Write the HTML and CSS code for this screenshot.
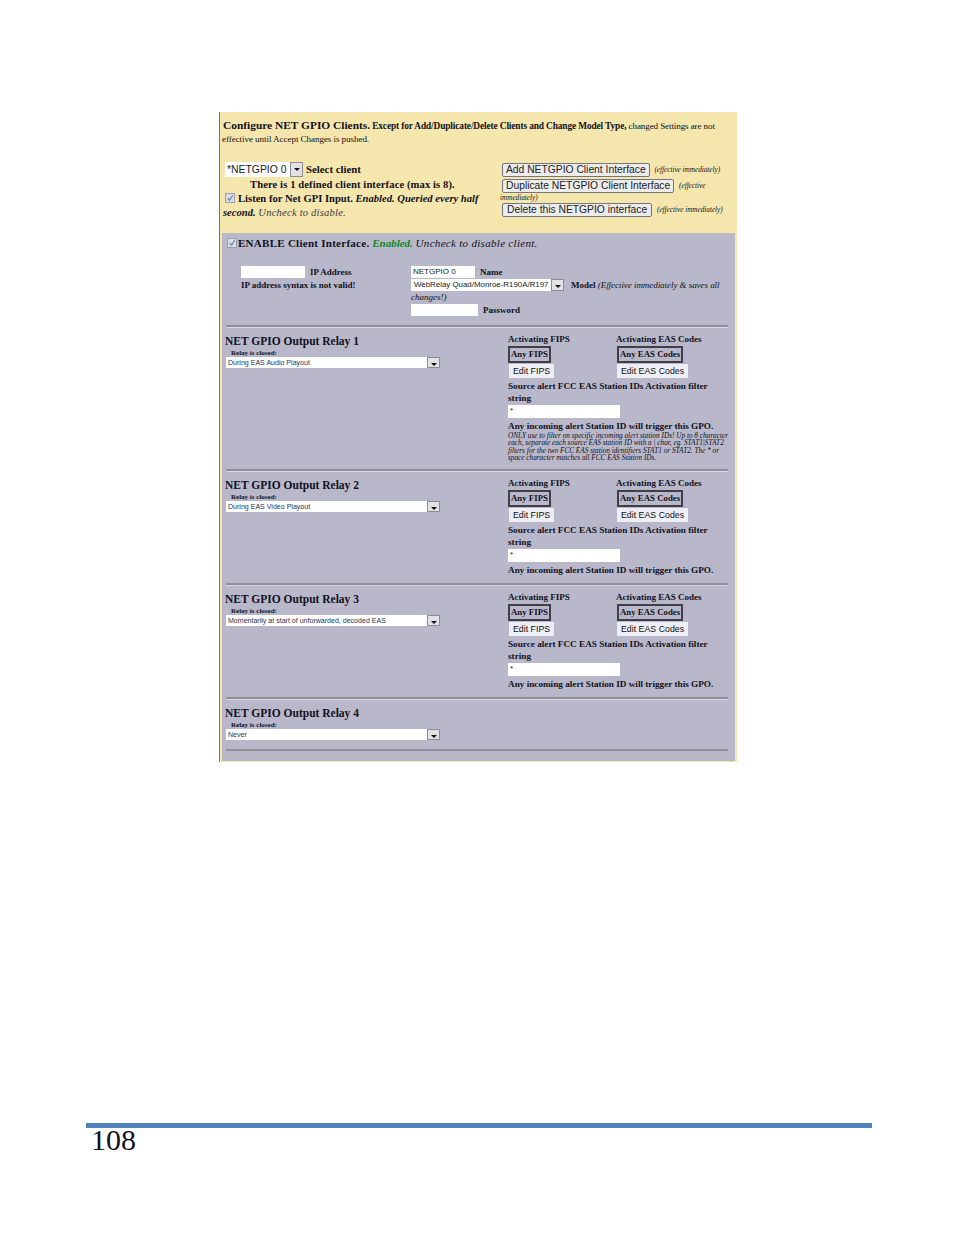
FILE: index.html
```html
<!DOCTYPE html>
<html lang="en">
  <head>
    <meta charset="UTF-8" />
    <title>NET GPIO Clients</title>
    <link rel="stylesheet" href="styles.css">
  </head>
  <body>
    <main class="page">
      <section class="panel">
        <header class="config">
          <p class="intro-line"><b class="intro-title">Configure NET GPIO Clients.</b> <b class="intro-bold">Except for Add/Duplicate/Delete Clients and Change Model Type,</b> changed Settings are not</p>
          <p class="intro-line intro-second">effective until Accept Changes is pushed.</p>
          <div class="config-cols">
            <div class="config-left">
              <div class="client-row">
                <span class="select client-select"><span class="select-value">*NETGPIO 0</span><span class="arrow"></span></span>
                <b class="client-label">Select client</b>
              </div>
              <p class="defined"><b>There is 1 defined client interface (max is 8).</b></p>
              <p class="listen"><svg class="check" viewBox="0 0 9 9"><path d="M2 4.5 L4 7 L7.5 1.5" /></svg><b>Listen for Net GPI Input.</b> <b><i>Enabled. Queried every half</i></b></p>
              <p class="listen-2"><b><i>second.</i></b> <i class="hint">Uncheck to disable.</i></p>
            </div>
            <div class="config-right">
              <p class="action"><span class="button">Add NETGPIO Client Interface</span> <i>(effective immediately)</i></p>
              <p class="action action-wrap"><span class="button">Duplicate NETGPIO Client Interface</span> <i>(effective</i></p>
              <p class="action-more"><i>immediately)</i></p>
              <p class="action"><span class="button button-delete">Delete this NETGPIO interface</span> <i>(effective immediately)</i></p>
            </div>
          </div>
        </header>

        <div class="client">
          <p class="enable"><svg class="check" viewBox="0 0 9 9"><path d="M2 4.5 L4 7 L7.5 1.5" /></svg><b class="enable-title">ENABLE Client Interface.</b> <b><i class="green">Enabled.</i></b> <i class="enable-hint">Uncheck to disable client.</i></p>
          <div class="client-cols">
            <div class="client-left">
              <div class="field"><span class="input ip-input"></span><b>IP Address</b></div>
              <p class="invalid"><b>IP address syntax is not valid!</b></p>
            </div>
            <div class="client-right">
              <div class="field"><span class="input name-input">NETGPIO 0</span><b>Name</b></div>
              <div class="model"><span class="select model-select"><span class="select-value">WebRelay Quad/Monroe-R190A/R197</span><span class="arrow"></span></span><b class="model-label">Model</b> <i class="model-note">(Effective immediately &amp; saves all</i></div>
              <p class="changes"><i>changes!)</i></p>
              <div class="field"><span class="input pass-input"></span><b>Password</b></div>
            </div>
          </div>

          <article class="relay relay-long">
            <div class="relay-left">
              <h2>NET GPIO Output Relay 1</h2>
              <label>Relay is closed:</label>
              <span class="select relay-select"><span class="select-value">During EAS Audio Playout</span><span class="arrow"></span></span>
            </div>
            <div class="relay-right">
              <div class="codes">
                <div class="code-col fips"><b>Activating FIPS</b><span class="code-box">Any FIPS</span><span class="edit">Edit FIPS</span></div>
                <div class="code-col"><b>Activating EAS Codes</b><span class="code-box">Any EAS Codes</span><span class="edit">Edit EAS Codes</span></div>
              </div>
              <p class="filter"><b>Source alert FCC EAS Station IDs Activation filter string</b></p>
              <span class="input filter-input">*</span>
              <p class="trigger"><b>Any incoming alert Station ID will trigger this GPO.</b></p>
              <p class="note">ONLY use to filter on specific incoming alert station IDs! Up to 8 character each, separate each source EAS station ID with a | char, eg. STAT1|STAT2 filters for the two FCC EAS station identifiers STAT1 or STAT2. The * or space character matches all FCC EAS Station IDs.</p>
            </div>
          </article>

          <article class="relay">
            <div class="relay-left">
              <h2>NET GPIO Output Relay 2</h2>
              <label>Relay is closed:</label>
              <span class="select relay-select"><span class="select-value">During EAS Video Playout</span><span class="arrow"></span></span>
            </div>
            <div class="relay-right">
              <div class="codes">
                <div class="code-col fips"><b>Activating FIPS</b><span class="code-box">Any FIPS</span><span class="edit">Edit FIPS</span></div>
                <div class="code-col"><b>Activating EAS Codes</b><span class="code-box">Any EAS Codes</span><span class="edit">Edit EAS Codes</span></div>
              </div>
              <p class="filter"><b>Source alert FCC EAS Station IDs Activation filter string</b></p>
              <span class="input filter-input">*</span>
              <p class="trigger"><b>Any incoming alert Station ID will trigger this GPO.</b></p>
            </div>
          </article>

          <article class="relay">
            <div class="relay-left">
              <h2>NET GPIO Output Relay 3</h2>
              <label>Relay is closed:</label>
              <span class="select relay-select"><span class="select-value">Momentarily at start of unforwarded, decoded EAS</span><span class="arrow"></span></span>
            </div>
            <div class="relay-right">
              <div class="codes">
                <div class="code-col fips"><b>Activating FIPS</b><span class="code-box">Any FIPS</span><span class="edit">Edit FIPS</span></div>
                <div class="code-col"><b>Activating EAS Codes</b><span class="code-box">Any EAS Codes</span><span class="edit">Edit EAS Codes</span></div>
              </div>
              <p class="filter"><b>Source alert FCC EAS Station IDs Activation filter string</b></p>
              <span class="input filter-input">*</span>
              <p class="trigger"><b>Any incoming alert Station ID will trigger this GPO.</b></p>
            </div>
          </article>

          <article class="relay relay-last">
            <div class="relay-left">
              <h2>NET GPIO Output Relay 4</h2>
              <label>Relay is closed:</label>
              <span class="select relay-select"><span class="select-value">Never</span><span class="arrow"></span></span>
            </div>
          </article>
        </div>
      </section>
    </main>
    <footer class="foot">
      <div class="foot-rule"></div>
      <div class="foot-num">108</div>
    </footer>
  </body>
</html>
```

FILE: styles.css
```css
* {
  box-sizing: border-box;
  margin: 0;
  padding: 0;
}
:root {
  --yellow: #f5e6ad;
  --lilac: #b9b8ca;
  --line: #8f8f97;
  --ink: #11111a;
}
body {
  background: #fff;
  color: var(--ink);
  font-family: "Liberation Serif", serif;
  font-size: 10px;
  height: 1235px;
  overflow: hidden;
}
b {
  font-weight: bold;
}
.page {
  height: 1123px;
  padding: 112px 0 0 219px;
}
.panel {
  width: 518px;
  height: 650px;
  background: var(--yellow);
  border-left: 1px solid #77745f;
  padding-bottom: 1px;
  display: flex;
  flex-direction: column;
}
/* Top yellow block */
.config {
  height: 121px;
  padding: 7px 0 0 3px;
}
.intro-line {
  font-size: 9.1px;
  line-height: 13px;
  letter-spacing: -0.12px;
  white-space: nowrap;
}
.intro-second {
  margin-left: -1px;
  letter-spacing: -0.08px;
}
.intro-title {
  font-size: 11.4px;
  letter-spacing: 0;
}
.intro-bold {
  font-size: 9.35px;
}
.config-cols {
  display: flex;
  margin-top: 15px;
}
.config-left {
  width: 277px;
  flex: none;
  padding-left: 2px;
  font-size: 10.6px;
}
.client-row {
  display: flex;
  align-items: center;
  gap: 3px;
  height: 15px;
  margin-top: 1px;
}
.client-label {
  font-size: 10.8px;
  line-height: 13px;
  margin-top: -1px;
}
.defined {
  margin: 1px 0 0 25px;
  line-height: 13px;
  letter-spacing: 0.1px;
  white-space: nowrap;
}
.listen {
  margin-top: 1px;
  line-height: 14px;
  white-space: nowrap;
}
.listen .check {
  margin-right: 3px;
}
.listen-2 {
  margin-left: -2px;
  line-height: 14px;
  white-space: nowrap;
}
.hint {
  color: #3a3a46;
  letter-spacing: 0.2px;
}
.config-right {
  margin-top: 2px;
  font-size: 7.2px;
  white-space: nowrap;
}
.action {
  line-height: 14px;
  height: 14px;
  margin-bottom: 2px;
}
.action-wrap {
  margin-bottom: 0;
}
.action-more {
  line-height: 10px;
  height: 10px;
}
.button {
  display: inline-block;
  height: 14px;
  padding: 0 3px;
  margin: 0 3px 0 2px;
  border: 1px solid #74747c;
  border-radius: 2px;
  background: #ececec;
  font-family: "Liberation Sans", sans-serif;
  font-size: 10.3px;
  line-height: 12px;
  color: #222;
  vertical-align: top;
}
.button-delete {
  padding: 0 4px;
}
/* Lilac block */
.client {
  flex: 1;
  margin: 0 2px 0 2px;
  background: var(--lilac);
  padding: 3px 7px 0 3px;
}
.enable {
  font-size: 11px;
  line-height: 14px;
  padding-left: 2px;
  white-space: nowrap;
}
.enable-title {
  letter-spacing: 0.27px;
}
.enable-hint {
  letter-spacing: 0.3px;
}
.green {
  color: #0a8a22;
}
.check {
  display: inline-block;
  width: 10px;
  height: 10px;
  margin-right: 1px;
  background: #d9dde8;
  border: 1px solid #9aa0b4;
  vertical-align: -1px;
}
.check path {
  fill: none;
  stroke: #7d86a8;
  stroke-width: 1.4;
}
.client-cols {
  display: flex;
  margin-top: 16px;
}
.client-left {
  width: 186px;
  flex: none;
  padding-left: 16px;
  font-size: 9px;
}
.client-right {
  flex: 1;
  font-size: 9px;
}
.field {
  display: flex;
  align-items: center;
  gap: 5px;
  height: 12px;
}
.input {
  display: block;
  background: #fff;
  font-family: "Liberation Sans", sans-serif;
  font-size: 8px;
  line-height: 12px;
  color: #222;
  padding-left: 2px;
}
.ip-input {
  width: 64px;
  height: 12px;
}
.name-input {
  width: 64px;
  height: 12px;
}
.pass-input {
  width: 67px;
  height: 12px;
}
.invalid {
  margin-top: 1px;
  line-height: 13px;
}
.model {
  margin-top: 1px;
  line-height: 12px;
  white-space: nowrap;
}
.model-label {
  margin-left: 7px;
}
.model-note {
  letter-spacing: -0.05px;
}
.changes {
  line-height: 12px;
}
.changes + .field {
  margin-top: 1px;
}
.select {
  display: inline-flex;
  align-items: stretch;
  background: #fff;
  font-family: "Liberation Sans", sans-serif;
  vertical-align: top;
  color: #222;
}
.select-value {
  flex: 1;
  padding-left: 2px;
  white-space: nowrap;
  overflow: hidden;
}
.arrow {
  position: relative;
  flex: none;
  width: 13px;
  background: #e2e2e6;
  border: 1px solid #8c8c94;
}
.arrow::after {
  content: "";
  position: absolute;
  left: 3px;
  top: 5px;
  border: 3px solid transparent;
  border-top: 3px solid #111;
  border-bottom: 0;
}
.client-select {
  width: 78px;
  height: 15px;
  font-size: 10.4px;
  line-height: 15px;
}
.model-select {
  width: 153px;
  height: 12px;
  font-size: 7.9px;
  line-height: 12px;
}
.model-select .select-value {
  padding-left: 3px;
}
.relay-select {
  width: 214px;
  height: 11px;
  font-size: 7.05px;
  line-height: 11px;
  color: #2a3550;
}
/* Relay sections */
.relay {
  display: flex;
  height: 114px;
  margin-left: 1px;
  border-top: 2px solid var(--line);
  box-shadow: inset 0 1px 0 #d6d6de;
  padding-top: 6px;
}
.client-cols + .relay {
  margin-top: 9px;
}
.relay-long {
  height: 144px;
}
.relay-last {
  height: 54px;
  border-bottom: 2px solid var(--line);
}
.relay-left {
  width: 282px;
  flex: none;
}
.relay-left h2 {
  margin-left: -1px;
  font-size: 11.5px;
  line-height: 16px;
}
.relay-left label {
  display: block;
  font-size: 7px;
  font-weight: bold;
  line-height: 8px;
  padding-left: 5px;
}
.relay-right {
  flex: 1;
  font-size: 9px;
}
.codes {
  display: flex;
}
.code-col {
  display: flex;
  flex-direction: column;
  align-items: flex-start;
  line-height: 12px;
}
.fips {
  width: 108px;
}
.code-box {
  height: 17px;
  margin-top: 1px;
  padding: 0 1px;
  font-weight: bold;
  font-size: 8.8px;
  line-height: 13px;
  border: 2px solid #3f3f48;
}
.code-col + .code-col .code-box,
.code-col + .code-col .edit {
  margin-left: 1px;
}
.edit {
  height: 14px;
  margin-top: 1px;
  padding: 0 4px;
  background: #eeeef6;
  font-family: "Liberation Sans", sans-serif;
  font-size: 8.8px;
  line-height: 14px;
  color: #111;
}
.fips .edit {
  margin-left: 1px;
}
.filter {
  margin-top: 2px;
  width: 210px;
  font-size: 9.2px;
  line-height: 12px;
}
.filter-input {
  width: 112px;
  height: 13px;
  margin-top: 1px;
}
.trigger {
  margin-top: 2px;
  font-size: 9.2px;
  line-height: 12px;
}
.note {
  margin-top: 1px;
  font-size: 7.25px;
  font-style: italic;
  line-height: 7.3px;
  width: 222px;
}
/* Page footer */
.foot {
  margin-left: 86px;
  width: 786px;
}
.foot-rule {
  height: 5px;
  background: #4f81bd;
}
.foot-num {
  font-size: 30px;
  line-height: 23px;
  padding-left: 5px;
}
```
